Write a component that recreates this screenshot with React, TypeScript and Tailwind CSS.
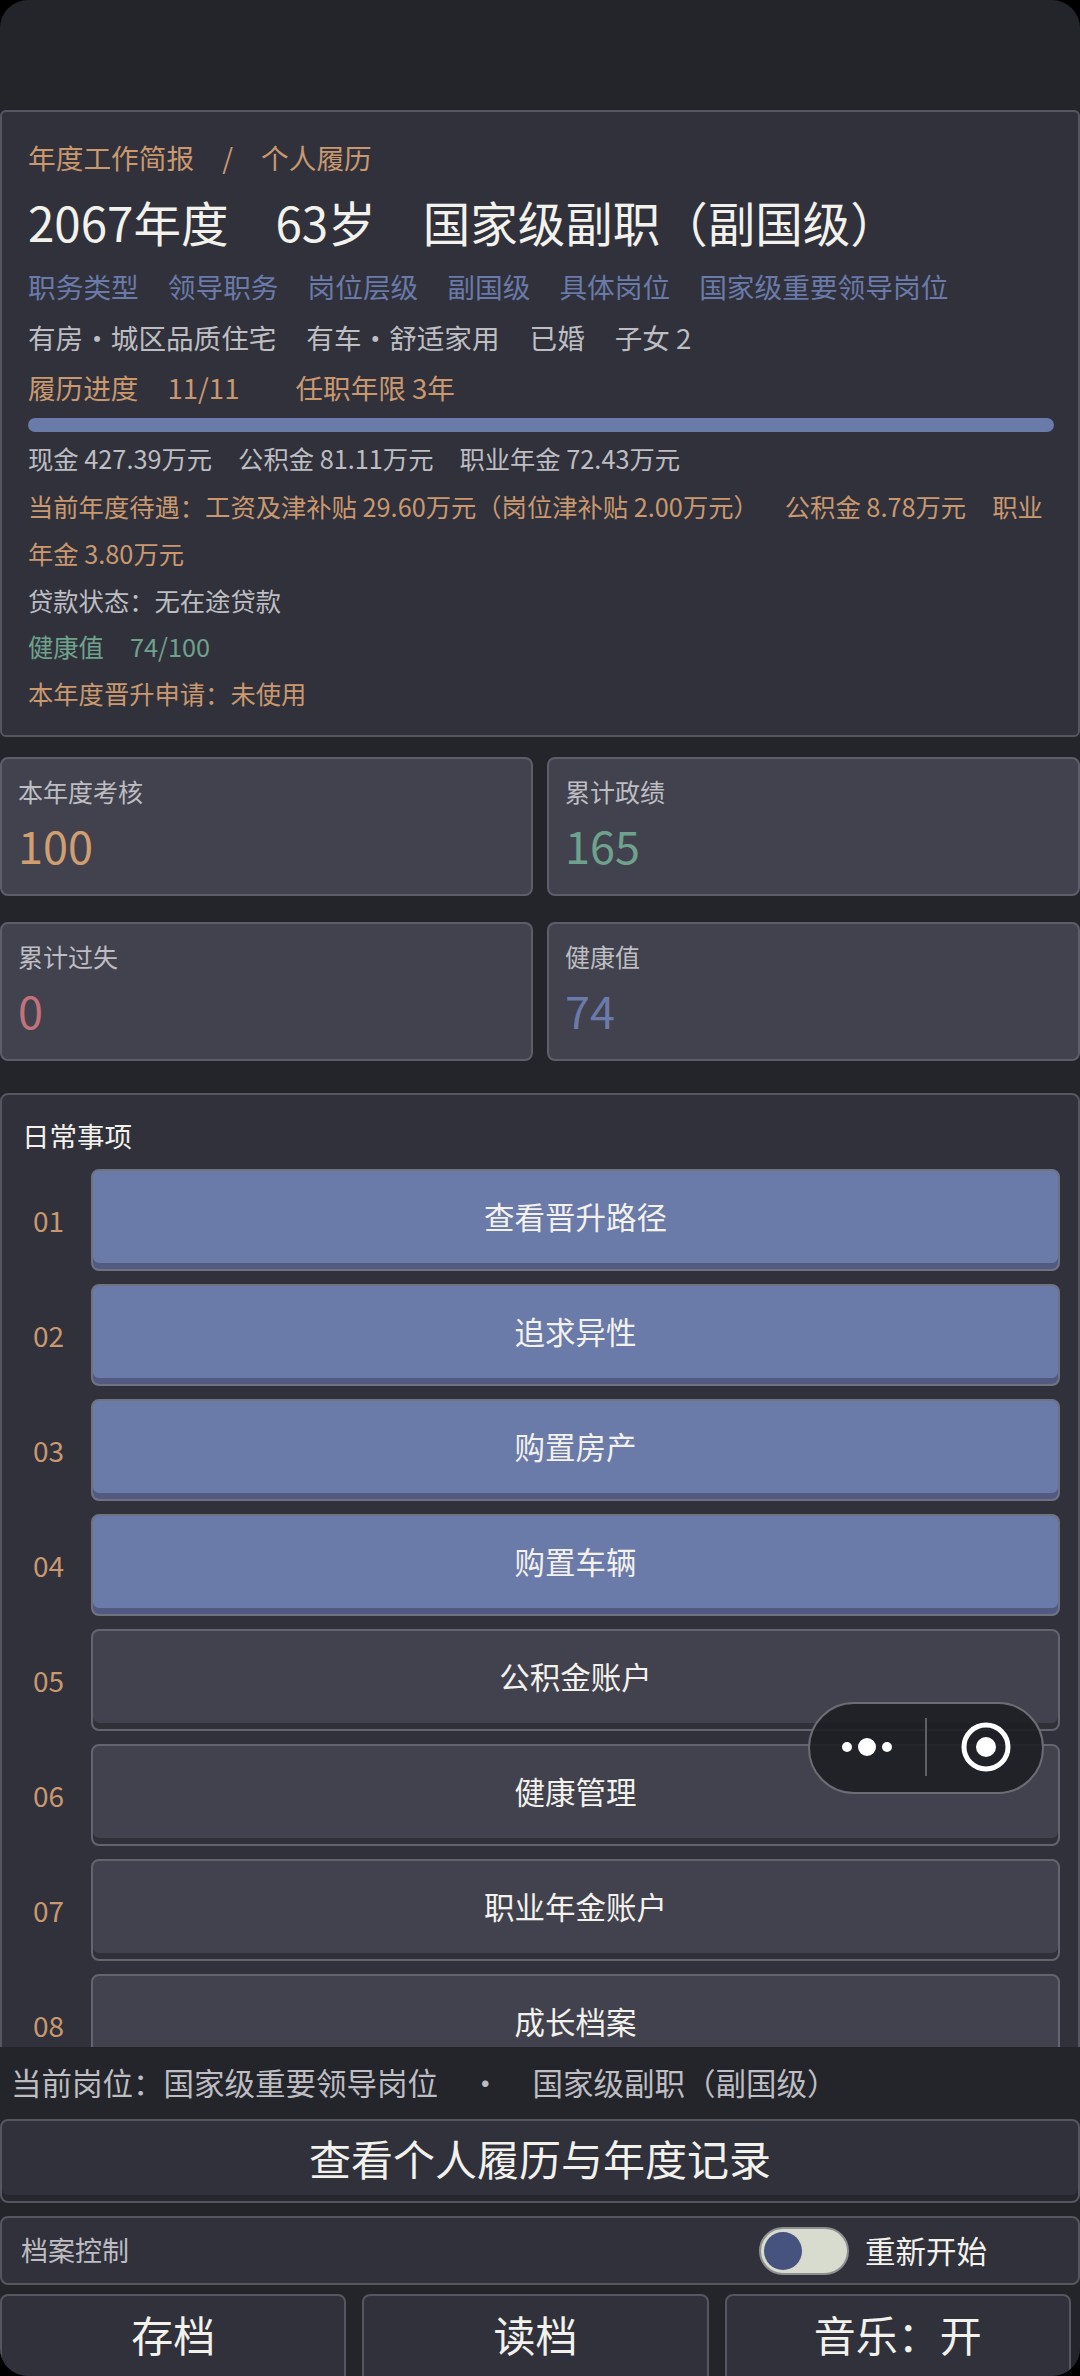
import React from 'react';

const font = { fontFamily: '"Noto Sans CJK SC", "Noto Sans", sans-serif' };

const stats = [
  { label: '本年度考核', value: '100', color: 'text-[#d19f6f]' },
  { label: '累计政绩', value: '165', color: 'text-[#6fa28d]' },
  { label: '累计过失', value: '0', color: 'text-[#c2727a]' },
  { label: '健康值', value: '74', color: 'text-[#6a7aa9]' },
];

const tasks = [
  { no: '01', title: '查看晋升路径', active: true },
  { no: '02', title: '追求异性', active: true },
  { no: '03', title: '购置房产', active: true },
  { no: '04', title: '购置车辆', active: true },
  { no: '05', title: '公积金账户', active: false },
  { no: '06', title: '健康管理', active: false },
  { no: '07', title: '职业年金账户', active: false },
  { no: '08', title: '成长档案', active: false },
];

const App: React.FC = () => {
  return (
    <div className="bg-black">
      <div
        className="relative flex h-[2376px] w-[1080px] flex-col overflow-hidden rounded-[28px] bg-[#24252b]"
        style={font}
      >
        <div className="h-[2047px] shrink-0 overflow-hidden pt-[110px]">
          {/* 履历卡片 */}
          <div className="h-[627px] rounded-[6px] border-2 border-[#55565f] bg-[#30313a] px-[26px] pt-[24px]">
            <div className="flex h-[44px] items-center gap-[28px] text-[27.7px] text-[#c9986f]">
              <span>年度工作简报</span>
              <span>/</span>
              <span>个人履历</span>
            </div>
            <div className="mt-[7px] flex h-[70px] items-center gap-[47px] text-[47.5px] text-[#f2f1ec]">
              <span>2067年度</span>
              <span>63岁</span>
              <span>国家级副职（副国级）</span>
            </div>
            <div className="mt-[7px] flex h-[46px] items-center gap-[29px] text-[27.7px] text-[#6a7aa9]">
              <span>职务类型</span>
              <span>领导职务</span>
              <span>岗位层级</span>
              <span>副国级</span>
              <span>具体岗位</span>
              <span>国家级重要领导岗位</span>
            </div>
            <div className="mt-[5px] flex h-[46px] items-center gap-[30px] text-[27.6px] text-[#bdbdc2]">
              <span>有房・城区品质住宅</span>
              <span>有车・舒适家用</span>
              <span>已婚</span>
              <span>子女 2</span>
            </div>
            <div className="mt-[4px] flex h-[46px] items-center text-[27.6px] text-[#c9986f]">
              <span>履历进度</span>
              <span className="ml-[29px]">11/11</span>
              <span className="ml-[56px]">任职年限 3年</span>
            </div>
            <div className="mt-[7px] h-[14px] w-[1026px] rounded-full bg-[#6a7aa9]" />
            <div className="mt-[3px] flex h-[48px] items-center gap-[26px] text-[25.3px] text-[#bdbdc2]">
              <span>现金 427.39万元</span>
              <span>公积金 81.11万元</span>
              <span>职业年金 72.43万元</span>
            </div>
            <p className="text-[25.3px] leading-[47px] text-[#c9986f]">
              当前年度待遇：工资及津补贴 29.60万元（岗位津补贴 2.00万元）<span className="ml-[26px]">公积金 8.78万元</span>
              <span className="ml-[26px]">职业年金 3.80万元</span>
            </p>
            <p className="text-[25.3px] leading-[46px] text-[#bdbdc2]">贷款状态：无在途贷款</p>
            <p className="flex gap-[26px] text-[25.3px] leading-[47px] text-[#6fa28d]">
              <span>健康值</span>
              <span>74/100</span>
            </p>
            <p className="text-[25.3px] leading-[46px] text-[#c9986f]">本年度晋升申请：未使用</p>
          </div>

          {/* 数据卡片 */}
          <div className="mt-[20px] grid grid-cols-2 gap-x-[14px] gap-y-[26px]">
            {stats.map((s) => (
              <div key={s.label} className="h-[139px] rounded-[8px] border-2 border-[#5d5e69] bg-[#41424d] px-[16px] pt-[12px]">
                <div className="text-[25px] leading-[40px] text-[#bdbdc2]">{s.label}</div>
                <div className={`mt-[6px] text-[45px] leading-[56px] ${s.color}`}>{s.value}</div>
              </div>
            ))}
          </div>

          {/* 日常事项 */}
          <div className="mt-[32px] rounded-[8px] border-2 border-[#55565f] bg-[#30313a] pb-[20px] pl-[20px] pr-[18px] pt-[20px]">
            <div className="h-[40px] text-[27.5px] leading-[40px] text-[#f2f1ec]">日常事项</div>
            <div className="mt-[14px] flex flex-col gap-[13px]">
              {tasks.map((t) => (
                <div key={t.no} className="flex items-center">
                  <span className="w-[69px] pl-[11px] text-[28px] text-[#c9986f]">{t.no}</span>
                  <button
                    className={
                      t.active
                        ? 'h-[102px] flex-1 rounded-[8px] border-2 border-[#70737f] bg-[#6a7aa9] pb-[6px] text-[30.5px] text-[#f2f1ec] shadow-[inset_0_-6px_0_#525a82]'
                        : 'h-[102px] flex-1 rounded-[8px] border-2 border-[#63646f] bg-[#41424d] pb-[6px] text-[30.5px] text-[#f2f1ec] shadow-[inset_0_-6px_0_#2f3038]'
                    }
                  >
                    {t.title}
                  </button>
                </div>
              ))}
            </div>
          </div>
        </div>

        {/* 底部操作区 */}
        <div className="flex-1 bg-[#24252b]">
          <div className="flex h-[72px] items-center gap-[32px] pl-[11px] text-[30.5px] text-[#bdbdc2]">
            <span>当前岗位：国家级重要领导岗位</span>
            <span>·</span>
            <span>国家级副职（副国级）</span>
          </div>
          <button className="block h-[84px] w-full rounded-[8px] border-2 border-[#55565f] bg-[#30313a] pb-[8px] text-[42px] text-[#f2f1ec] shadow-[inset_0_-6px_0_#26272e]">
            查看个人履历与年度记录
          </button>
          <div className="mt-[13px] flex h-[69px] items-center rounded-[8px] border-2 border-[#55565f] bg-[#30313a] pl-[19px]">
            <span className="text-[27px] text-[#bdbdc2]">档案控制</span>
            <div className="ml-[630px] flex h-[48px] w-[90px] items-center rounded-full border-2 border-[#8d8f90] bg-[#d7dccf] pl-[3px]">
              <div className="h-[38px] w-[38px] rounded-full bg-[#47537f]" />
            </div>
            <span className="ml-[16px] text-[30.5px] text-[#f2f1ec]">重新开始</span>
          </div>
          <div className="mt-[9px] flex gap-[16px] pr-[9px]">
            {['存档', '读档', '音乐：开'].map((label) => (
              <button
                key={label}
                className="h-[90px] flex-1 rounded-[8px] border-2 border-[#55565f] bg-[#30313a] pb-[12px] text-[42px] text-[#f2f1ec]"
              >
                {label}
              </button>
            ))}
          </div>
        </div>

        {/* 小程序胶囊 */}
        <div className="absolute left-[808px] top-[1702px] flex h-[92px] w-[236px] items-center rounded-full border-2 border-[#6c6d74] bg-[#1e1f24]/90">
          <svg width="236" height="92" viewBox="0 0 236 92" className="shrink-0">
            <circle cx="37" cy="45" r="5" fill="#fff" />
            <circle cx="57" cy="45" r="9" fill="#fff" />
            <circle cx="77" cy="45" r="5" fill="#fff" />
            <line x1="116" y1="16" x2="116" y2="74" stroke="#5f6067" strokeWidth="2" />
            <circle cx="176" cy="45" r="22" fill="none" stroke="#fff" strokeWidth="5" />
            <circle cx="176" cy="45" r="10" fill="#fff" />
          </svg>
        </div>
      </div>
    </div>
  );
};

export default App;
